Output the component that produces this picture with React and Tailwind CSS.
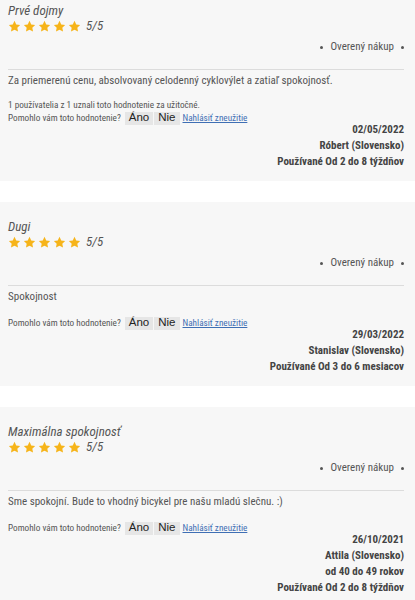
import React from "react";

const reviews = [
  {
    title: "Prvé dojmy",
    text: "Za priemerenú cenu, absolvovaný celodenný cyklovýlet a zatiaľ spokojnosť.",
    helpful: "1 používatelia z 1 uznali toto hodnotenie za užitočné.",
    date: "02/05/2022",
    author: "Róbert (Slovensko)",
    usage: "Používané Od 2 do 8 týždňov",
  },
  {
    title: "Dugi",
    text: "Spokojnost",
    date: "29/03/2022",
    author: "Stanislav (Slovensko)",
    usage: "Používané Od 3 do 6 mesiacov",
  },
  {
    title: "Maximálna spokojnosť",
    text: "Sme spokojní. Bude to vhodný bicykel pre našu mladú slečnu. :)",
    date: "26/10/2021",
    author: "Attila (Slovensko)",
    age: "od 40 do 49 rokov",
    usage: "Používané Od 2 do 8 týždňov",
  },
];

const condensed = {
  fontFamily:
    '"Roboto Condensed", "Liberation Sans Narrow", "DejaVu Sans Condensed", Roboto, sans-serif',
};

const arial = { fontFamily: '"Liberation Sans", Arial, sans-serif' };

function Star() {
  return (
    <svg width="13" height="13" viewBox="0 0 24 24" className="shrink-0">
      <path
        fill="#f6b41a"
        d="M12 1.5l3.2 6.6 7.2 1-5.2 5.1 1.3 7.2L12 18l-6.5 3.4 1.3-7.2L1.6 9.1l7.2-1z"
      />
    </svg>
  );
}

function Review({ review, first }) {
  return (
    <div
      className={`bg-[#f7f7f7] pl-2 pr-[11px] pb-[11px] text-[#555] ${first ? "pt-[3px]" : "pt-[17px]"}`}
      style={condensed}
    >
      <div className="text-[13px] leading-[16px] italic text-[#555]">{review.title}</div>
      <div className="flex items-center h-[14px] gap-[2px]">
        <Star />
        <Star />
        <Star />
        <Star />
        <Star />
        <span className="ml-[3px] text-[13px] italic leading-[14px]">5/5</span>
      </div>
      <div className="mt-[6px] flex h-[16px] items-center justify-end gap-[7px] text-[11px]">
        <span className="w-[3px] h-[3px] rounded-full bg-[#555]" />
        <span>Overený nákup</span>
        <span className="w-[3px] h-[3px] rounded-full bg-[#555]" />
      </div>
      <div className="mt-[14px] border-t border-[#dcdcdc]" />
      <p className="mt-[3px] text-[11px] leading-[16px]">{review.text}</p>
      {review.helpful ? (
        <div className="mt-[9px] h-[13px] text-[9.2px] leading-[13px]">{review.helpful}</div>
      ) : null}
      <div
        className={`flex h-[14px] items-center text-[9.2px] ${review.helpful ? "" : "mt-[11px]"}`}
      >
        <span>Pomohlo vám toto hodnotenie?</span>
        <span
          className="ml-[4px] bg-[#e6e6e6] px-[4px] h-[13px] flex items-center text-[11.5px] text-[#222]"
          style={arial}
        >
          Áno
        </span>
        <span
          className="ml-[1px] bg-[#e6e6e6] px-[4px] h-[13px] flex items-center text-[11.5px] text-[#222]"
          style={arial}
        >
          Nie
        </span>
        <a href="#" className="ml-[3px] text-[#3f6fb4] underline">
          Nahlásiť zneužitie
        </a>
      </div>
      <div className="-mt-[3px] flex flex-col items-end text-[11px] leading-[16px] font-bold text-[#444]">
        <span>{review.date}</span>
        <span>{review.author}</span>
        {review.age ? <span>{review.age}</span> : null}
        <span>{review.usage}</span>
      </div>
    </div>
  );
}

export default function App() {
  return (
    <div className="w-[415px] h-[600px] overflow-hidden bg-white flex flex-col gap-[21px]">
      {reviews.map((review, index) => (
        <Review key={index} review={review} first={index === 0} />
      ))}
    </div>
  );
}
